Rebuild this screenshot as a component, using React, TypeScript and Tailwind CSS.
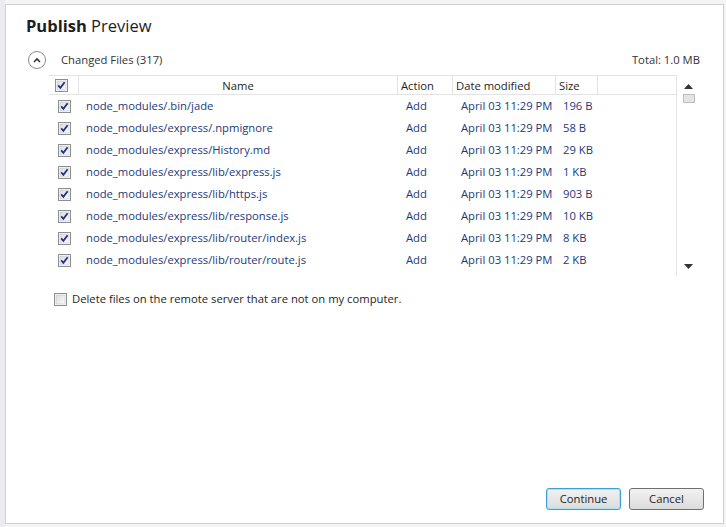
import React from "react";

const rows = [
  ["node_modules/.bin/jade", "196 B"],
  ["node_modules/express/.npmignore", "58 B"],
  ["node_modules/express/History.md", "29 KB"],
  ["node_modules/express/lib/express.js", "1 KB"],
  ["node_modules/express/lib/https.js", "903 B"],
  ["node_modules/express/lib/response.js", "10 KB"],
  ["node_modules/express/lib/router/index.js", "8 KB"],
  ["node_modules/express/lib/router/route.js", "2 KB"],
];

function Check({ checked }: { checked: boolean }) {
  return (
    <svg width="13" height="13" viewBox="0 0 13 13" className="block">
      <defs>
        <linearGradient id="cbg" x1="0" y1="0" x2="1" y2="1">
          <stop offset="0" stopColor="#dcdcdc" />
          <stop offset="1" stopColor="#fbfbfb" />
        </linearGradient>
      </defs>
      <rect x="0.5" y="0.5" width="12" height="12" fill="#fff" stroke="#8e8f8f" />
      <rect x="2" y="2" width="9" height="9" fill="url(#cbg)" stroke="#c4c4c4" strokeWidth="0.6" />
      {checked && (
        <path d="M3.2 6.4 L5.4 8.8 L9.6 3.2" fill="none" stroke="#21308c" strokeWidth="1.8" />
      )}
    </svg>
  );
}

export default function App() {
  const font = { fontFamily: '"Segoe UI", "Open Sans", "Noto Sans", sans-serif' };
  return (
    <div className="w-[726px] h-[527px] bg-[#f4f4f4] relative overflow-hidden" style={font}>
      <div className="absolute left-0 top-0 w-[5px] h-full bg-[#e9edf2]" />
      <div className="absolute left-[5px] top-[4px] w-[719px] h-[520px] bg-white border border-[#cfcfcf] flex flex-col">
        <div className="pl-[20px] pt-[9px] h-[40px] text-[16.5px] leading-[24px] text-[#1e1e1e]">
          <span className="font-bold">Publish</span> <span>Preview</span>
        </div>
        <div className="flex items-center h-[30px] pl-[22px] pr-[23px] text-[11.25px] text-[#333]">
          <div className="w-[18px] h-[18px] rounded-full border border-[#8a8a8a] flex items-center justify-center">
            <svg width="8" height="6" viewBox="0 0 8 6"><path d="M1 5 L4 2 L7 5" fill="none" stroke="#333" strokeWidth="1.6" /></svg>
          </div>
          <span className="ml-[15px]">Changed Files (317)</span>
          <span className="ml-auto">Total: 1.0 MB</span>
        </div>
        <div className="flex ml-[43px] mr-[23px]">
          <div className="w-[628px] h-[201px] border-r border-[#e3e3e3] flex flex-col text-[11.25px]">
            <div className="flex h-[20px] border-t border-b border-[#e3e3e3] text-[#1e1e1e] leading-[19px]">
              <div className="w-[30px] border-r border-[#e3e3e3] flex items-center pl-[6px]"><Check checked /></div>
              <div className="w-[319px] border-r border-[#e3e3e3] text-center">Name</div>
              <div className="w-[55px] border-r border-[#e3e3e3] pl-[3px]">Action</div>
              <div className="w-[103px] border-r border-[#e3e3e3] pl-[3px]">Date modified</div>
              <div className="w-[42px] border-r border-[#e3e3e3] pl-[3px]">Size</div>
            </div>
            {rows.map(([name, size]) => (
              <div key={name} className="flex h-[22px] items-center text-[#1b3a7a]">
                <div className="w-[30px] pl-[9px]"><Check checked /></div>
                <div className="w-[327px] pl-[7px] whitespace-nowrap">{name}</div>
                <div className="w-[55px]">Add</div>
                <div className="w-[102px]">April 03 11:29 PM</div>
                <div>{size}</div>
              </div>
            ))}
          </div>
          <div className="w-[23px] flex flex-col items-center pt-[9px] relative">
            <svg width="9" height="5" viewBox="0 0 9 5"><path d="M0 5 L4.5 0 L9 5 Z" fill="#333" /></svg>
            <div className="w-[12px] h-[9px] mt-[5px] bg-[#e4e4e4] border border-[#bdbdbd]" />
            <svg width="9" height="5" viewBox="0 0 9 5" className="absolute top-[189px] left-[7px]"><path d="M0 0 L4.5 5 L9 0 Z" fill="#333" /></svg>
          </div>
        </div>
        <div className="flex items-center ml-[48px] mt-[15px] text-[11.25px] text-[#1e1e1e]">
          <Check checked={false} />
          <span className="ml-[5px]">Delete files on the remote server that are not on my computer.</span>
        </div>
        <div className="mt-auto mb-[13px] mr-[19px] flex justify-end gap-[8px] text-[11.25px] text-[#1e1e1e]">
          <button className="w-[75px] h-[22px] rounded-[3px] border border-[#3c9fd6] bg-gradient-to-b from-[#f2f2f2] to-[#dcdcdc] shadow-[inset_0_0_0_1px_#a8e1f8]">Continue</button>
          <button className="w-[75px] h-[22px] rounded-[3px] border border-[#707070] bg-gradient-to-b from-[#f2f2f2] to-[#dcdcdc]">Cancel</button>
        </div>
      </div>
    </div>
  );
}
